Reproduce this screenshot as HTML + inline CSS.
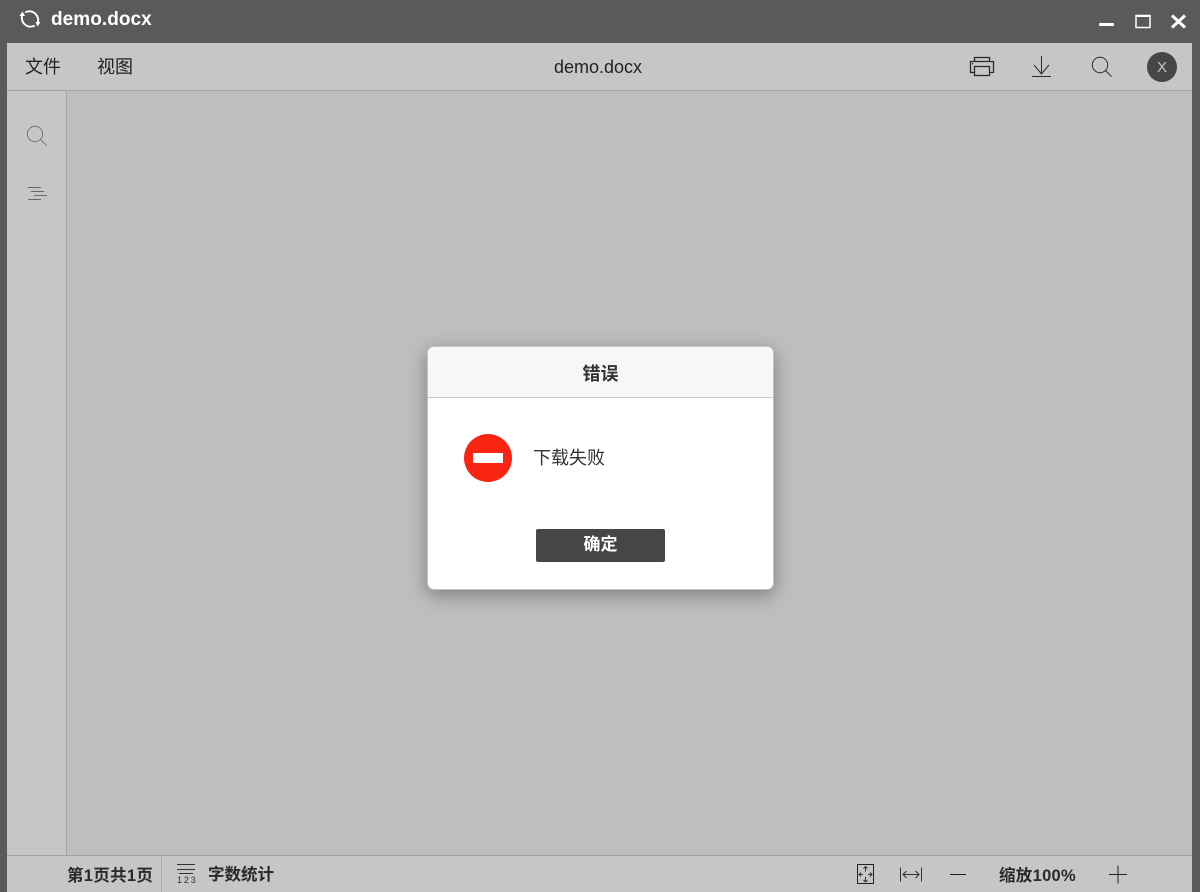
<!DOCTYPE html>
<html lang="zh">
<head>
<meta charset="utf-8">
<title>demo.docx</title>
<style>
html,body{margin:0;padding:0;width:1200px;height:892px;overflow:hidden;background:#5a5a5a;font-family:"Liberation Sans","Noto Sans CJK SC",sans-serif;color:#222}
.a{position:absolute;white-space:nowrap}
svg{position:absolute;overflow:visible;fill:none}
#main{position:absolute;left:7px;top:43px;width:1185px;height:849px;background:#bebebe}
#tool{position:absolute;left:7px;top:43px;width:1185px;height:47px;background:#c6c6c6;border-bottom:1px solid #a3a3a3}
#side{position:absolute;left:7px;top:91px;width:59px;height:764px;background:#c6c6c6;border-right:1px solid #a3a3a3}
#foot{position:absolute;left:7px;top:855px;width:1185px;height:36px;background:#c6c6c6;border-top:1px solid #a3a3a3}
#dlg{position:absolute;left:427px;top:346px;width:345px;height:242px;background:#fff;border:1px solid #c4c4c4;border-radius:7px;box-shadow:0 5px 18px rgba(0,0,0,.35);overflow:hidden}
#dh{position:absolute;left:0;top:0;width:345px;height:50px;background:#f7f7f7;border-bottom:1px solid #c8c8c8}
#btn{position:absolute;left:536px;top:529px;width:129px;height:33px;background:#464646;border-radius:2px}
</style>
</head>
<body>
<div id="main"></div>
<div id="tool"></div>
<div id="side"></div>
<div id="foot"></div>

<svg style="left:0;top:0" width="1200" height="892">
  <!-- refresh -->
  <g stroke="#fff" stroke-width="1.900" stroke-linecap="round">
    <path d="M22 15C20.500 23 27 28.500 34 26"/>
    <path d="M26 12C33 9.500 39.500 15 38 23"/>
  </g>
  <path d="M19.500 16L22.500 11.500L25 16Z M35.500 22L40.500 22L37.500 26.500Z" fill="#fff"/>
  <!-- window controls -->
  <rect x="1099" y="23" width="15" height="3" rx="1" fill="#fff"/>
  <rect x="1136" y="15.500" width="14" height="12" stroke="#fff" stroke-width="1.500"/>
  <rect x="1135.500" y="15" width="15" height="2" fill="#fff"/>
  <path d="M1172 15.500L1185 27.500M1185 15.500L1172 27.500" stroke="#fff" stroke-width="3"/>
  <!-- printer -->
  <g stroke="#2a2a2a" stroke-width="1.300">
    <path d="M974.500 61V57.500H989.500V61"/>
    <path d="M974.500 72.500H970.500V61.500H993.500V72.500H989.500"/>
    <rect x="974.500" y="66.500" width="15" height="9"/>
  </g>
  <rect x="972" y="63" width="1.200" height="1.200" fill="#2a2a2a"/>
  <!-- download -->
  <g stroke="#2a2a2a" stroke-width="1">
    <path d="M1041.500 56V74M1034 65L1041.500 74L1049 65"/>
    <path d="M1032 76.500H1051"/>
  </g>
  <!-- search top -->
  <g stroke="#2a2a2a" stroke-width="1">
    <circle cx="1100" cy="65" r="7.700"/>
    <path d="M1105.500 70.500L1111.500 76.500"/>
  </g>
  <!-- avatar -->
  <circle cx="1162" cy="67" r="15" fill="#464646"/>
  <!-- sidebar -->
  <g stroke="#767676" stroke-width="1">
    <circle cx="35" cy="134" r="7.700"/>
    <path d="M40.500 139.500L46.500 145.500"/>
    <path d="M28 187.500H41M31 191.500H44M34 195.500H47M28 199.500H41" stroke="#666"/>
  </g>
  <!-- footer icons -->
  <g stroke="#333" stroke-width="1">
    <path d="M177 864.500H195M177 869.500H195M179 873.500H193"/>
    <path d="M857.500 864.500H873.500V883.500H857.500Z" stroke="#222" stroke-width="1"/>
    <path d="M865.500 866.500V871.500M863.500 868.500L865.500 866.500L867.500 868.500M865.500 877V882M863.500 880L865.500 882L867.500 880M859 874.500H863M861 872.500L859 874.500L861 876.500M868 874.500H872M870 872.500L872 874.500L870 876.500"/>
    <path d="M900.500 867.500V881.500M921.500 867.500V881.500"/>
    <path d="M903 874.500H919M906.500 871L903 874.500L906.500 878M915.500 871L919 874.500L915.500 878"/>
    <path d="M950 874.500H966M1109 874.500H1127M1118 865.500V883.500" stroke="#222"/>
  </g>
</svg>

<div class="a" style="left:51px;top:8px;font-size:19px;line-height:24px;font-weight:700;color:#fff;letter-spacing:.05px">demo.docx</div>
<div class="a" style="left:25px;top:54px;font-size:18px;line-height:26px">文件</div>
<div class="a" style="left:97px;top:54px;font-size:18px;line-height:26px">视图</div>
<div class="a" style="left:554px;top:55px;font-size:18px;line-height:24px">demo.docx</div>
<div class="a" style="left:1147px;top:58px;width:30px;text-align:center;font-size:15px;line-height:20px;color:#c6c6c6">X</div>

<div class="a" style="left:67px;top:864px;font-size:16.500px;line-height:24px;font-weight:700;letter-spacing:.3px;color:#2a2a2a">第1页共1页</div>
<div style="position:absolute;left:161px;top:856px;width:1px;height:36px;background:#adadad"></div>
<div class="a" style="left:208px;top:863px;font-size:16.500px;line-height:24px;font-weight:700;color:#2a2a2a">字数统计</div>
<div class="a" style="left:177px;top:874px;width:19px;font-size:9px;line-height:12px;letter-spacing:1.900px;color:#333">123</div>
<div class="a" style="left:999px;top:864px;font-size:16.500px;line-height:24px;font-weight:700;letter-spacing:.3px;color:#2a2a2a">缩放100%</div>

<div id="dlg"><div id="dh"></div></div>
<div class="a" style="left:428px;top:361px;width:345px;text-align:center;font-size:18px;line-height:26px;font-weight:700;color:#333">错误</div>
<svg style="left:0;top:0" width="1200" height="892">
  <circle cx="488" cy="458" r="24" fill="#f92512"/>
  <rect x="473" y="453" width="30" height="10" fill="#fff"/>
</svg>
<div class="a" style="left:533px;top:445px;font-size:18px;line-height:26px;color:#333">下载失败</div>
<div id="btn"></div>
<div class="a" style="left:536px;top:533px;width:129px;text-align:center;font-size:17px;line-height:24px;font-weight:700;color:#fff">确定</div>
</body>
</html>
